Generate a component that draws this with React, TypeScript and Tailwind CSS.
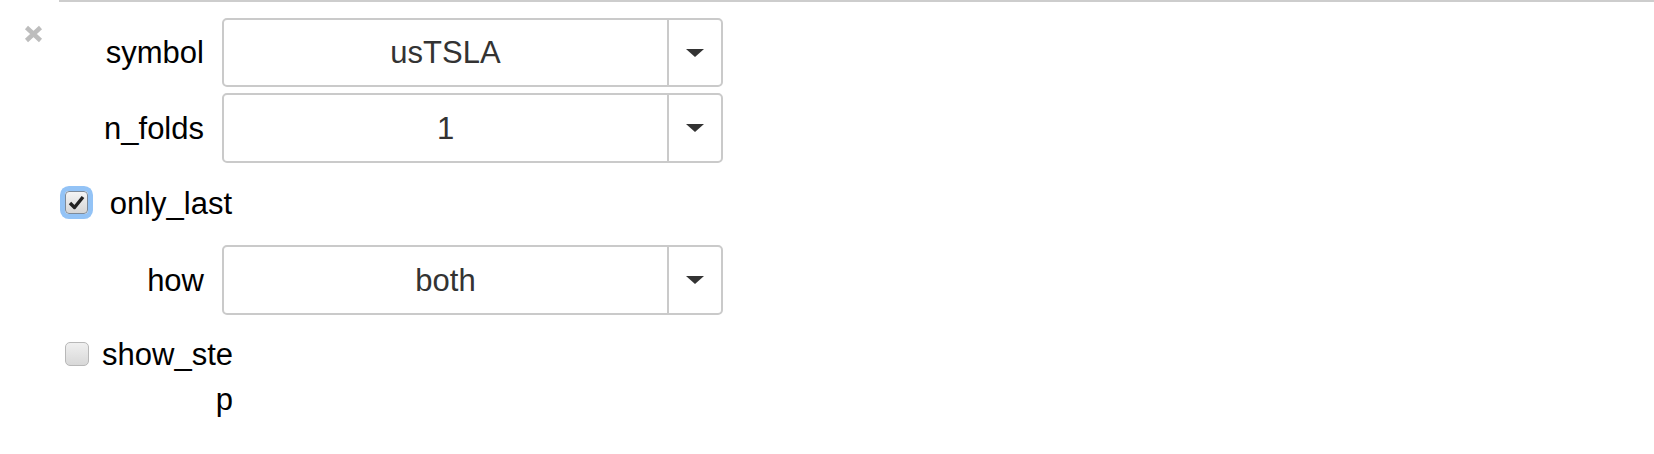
import React from "react";

const font = { fontFamily: '"Liberation Sans", Arial, Helvetica, sans-serif' };

function Caret() {
  return (
    <svg width="18" height="8" viewBox="0 0 18 8">
      <path d="M0 0 L18 0 L9 8 Z" fill="#333" />
    </svg>
  );
}

function SelectRow({ label, value, h }: { label: string; value: string; h: string }) {
  return (
    <div className="flex items-center">
      <div className="w-[145px] text-right text-[31px] text-black leading-none">{label}</div>
      <div className={`ml-[18px] flex w-[501px] ${h} rounded-[5px] border-2 border-[#cacaca] bg-white`}>
        <div className="flex flex-1 items-center justify-center text-[31px] text-[#333] leading-none">{value}</div>
        <div className="flex w-[54px] items-center justify-center border-l-2 border-[#cacaca]">
          <Caret />
        </div>
      </div>
    </div>
  );
}

function CheckRow({ label, checked }: { label: string; checked: boolean }) {
  return (
    <div className="flex items-start">
      <div className="ml-[6px] mt-[10px]">
        {checked ? (
          <div className="flex h-[23px] w-[23px] items-center justify-center rounded-[4px] border border-[#7d8a99] bg-gradient-to-b from-[#f4f4f4] to-[#d6d6d6] ring-[5px] ring-[#93c3f6]">
            <svg width="17" height="15" viewBox="0 0 17 15">
              <path d="M2 8 L6.5 12.5 L15 2" fill="none" stroke="#222" strokeWidth="3.4" strokeLinejoin="round" />
            </svg>
          </div>
        ) : (
          <div className="h-[24px] w-[24px] rounded-[5px] border border-[#b8b8b8] bg-gradient-to-b from-[#f0f0f0] to-[#d8d8d8]" />
        )}
      </div>
      <div className="w-[144px] break-all text-right text-[31px] leading-[45px] text-black">{label}</div>
    </div>
  );
}

export default function App() {
  return (
    <div className="h-[454px] w-[1654px] bg-white" style={font}>
      <div className="flex">
        <div className="w-[59px] pl-[24px] pt-[25px]">
          <svg width="19" height="18" viewBox="0 0 19 18">
            <path d="M2.5 2.5 L16.5 15.5 M16.5 2.5 L2.5 15.5" stroke="#bdbdbd" strokeWidth="4.5" strokeLinecap="butt" />
          </svg>
        </div>
        <div className="flex-1 border-t-2 border-[#cdcdcd]">
          <div className="mt-[16px]">
            <SelectRow label="symbol" value="usTSLA" h="h-[69px]" />
          </div>
          <div className="mt-[6px]">
            <SelectRow label="n_folds" value="1" h="h-[70px]" />
          </div>
          <div className="mt-[18px]">
            <CheckRow label="only_last" checked={true} />
          </div>
          <div className="mt-[19px]">
            <SelectRow label="how" value="both" h="h-[70px]" />
          </div>
          <div className="mt-[17px]">
            <CheckRow label="show_step" checked={false} />
          </div>
        </div>
      </div>
    </div>
  );
}
